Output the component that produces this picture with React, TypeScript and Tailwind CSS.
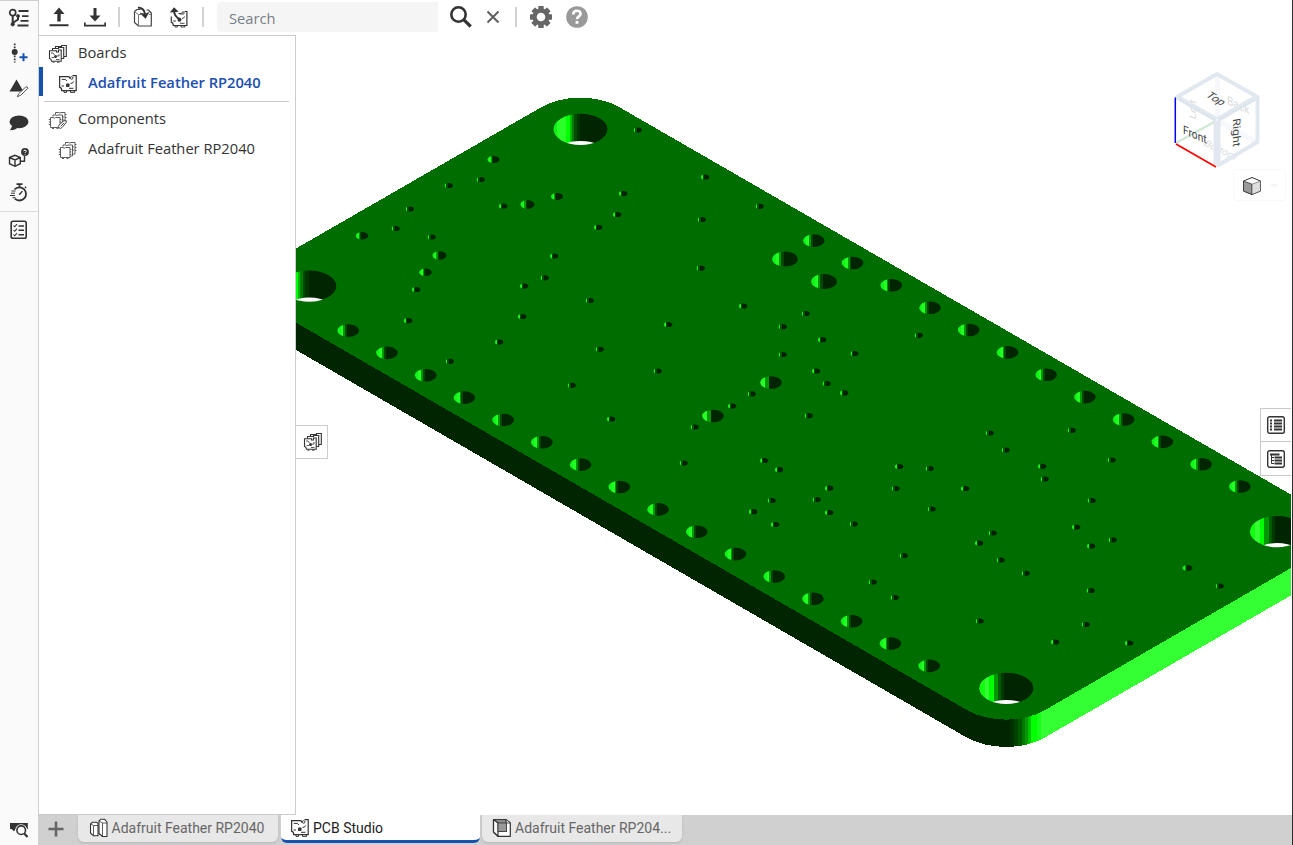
import React from "react";

type IconProps = { className?: string };

const INK = "#333333";

/* ---------- Left rail icons ---------- */

function FeatureListIcon() {
  return (
    <svg width="22" height="20" viewBox="0 0 22 20" fill="none" stroke={INK}>
      <circle cx="4.700" cy="4.700" r="3" strokeWidth="1.700" />
      <path d="M4.700 8v8M4.700 15 10 11.500V8.500" strokeWidth="2" />
      <circle cx="4.700" cy="16.300" r="1.700" fill={INK} strokeWidth=".8" />
      <circle cx="10" cy="8" r="1.500" fill={INK} strokeWidth=".8" />
      <path d="M10.500 3H20.500M14 8.200H20.500M12.500 12.900H20.500M9.500 17.500H20.500" strokeWidth="1.800" />
    </svg>
  );
}

function InsertPointIcon() {
  return (
    <svg width="22" height="20" viewBox="0 0 22 20">
      <path d="M6.700 0.500V19.500" stroke={INK} strokeWidth="1.700" strokeDasharray="1.800 1.200" />
      <circle cx="6.700" cy="9" r="3" fill={INK} />
      <path d="M15.500 10.200V18.200M11.500 14.200H19.500" stroke="#1651b0" strokeWidth="2" />
    </svg>
  );
}

function AppearanceIcon() {
  return (
    <svg width="22" height="20" viewBox="0 0 22 20">
      <path d="M8.500 1.500 15.500 13.500H1.500Z" fill={INK} />
      <path d="M9.300 18.700 10.700 15.700 17.700 9Q19.500 8.200 19.800 10.200L12.800 17.200Z" fill="#fafafa" stroke="#555" strokeWidth="1" />
    </svg>
  );
}

function CommentIcon() {
  return (
    <svg width="22" height="20" viewBox="0 0 22 20" fill={INK}>
      <ellipse cx="11" cy="8.800" rx="9.500" ry="6.400" />
      <path d="M4.500 12.500 2 17.300Q7.500 17.500 10 14Z" />
    </svg>
  );
}

function PartHelpIcon() {
  return (
    <svg width="22" height="22" viewBox="0 0 22 22" fill="none" stroke={INK} strokeWidth="1.400">
      <path d="M1.500 10.500 6.800 8.300 12.300 10.500V16.700L7 19.300 1.500 16.700ZM1.500 10.500 7 13 12.300 10.500M7 13V19" />
      <path d="M13 14.300H16.500V9" />
      <circle cx="17" cy="5" r="3.900" fill={INK} stroke="none" />
      <path d="M15.500 4.200C15.800 2.700 18.300 2.800 18.300 4.200 18.200 5 17 5 17 6M17 7V7.800" stroke="#fff" strokeWidth="1" />
    </svg>
  );
}

function StopwatchIcon() {
  return (
    <svg width="22" height="22" viewBox="0 0 22 22" fill="none" stroke={INK}>
      <path d="M6.500 7.500A6.600 6.600 0 1 1 6.800 16.600" strokeWidth="1.800" />
      <path d="M8.500 2.200H14.500M11.500 2.500V5M17 5.800 18 4.800" strokeWidth="1.700" />
      <path d="m11.200 12.700 3.200-3.600" strokeWidth="1.400" />
      <path d="M3.500 9H7.500M3 11.200H7M2 13.500H7M4.500 15.700H7.500" strokeWidth="1" />
    </svg>
  );
}

function ChecklistIcon() {
  return (
    <svg width="18" height="20" viewBox="0 0 18 20" fill="none" stroke={INK}>
      <rect x="1.200" y="1.200" width="15" height="17" rx="1.800" strokeWidth="1.600" />
      <path d="m3.500 5.500 1.200 1.300L7 4.200M3.500 10l1.200 1.300L7 8.700M3.500 14.500l1.200 1.300L7 13.200" strokeWidth="1.100" />
      <path d="M8.500 6H14M8.500 10.300H14M8.500 14.800H14" strokeWidth="1.500" />
    </svg>
  );
}

function InspectIcon() {
  return (
    <svg width="20" height="18" viewBox="0 0 20 18">
      <path d="M1 2H18.800V8H1ZM2.500 8H7L4.800 10.200Z" fill={INK} />
      <circle cx="12.200" cy="9.200" r="6" fill="#fafafa" />
      <circle cx="12.200" cy="9.200" r="4.300" fill="#fafafa" stroke={INK} strokeWidth="1.600" />
      <path d="m15.200 12.600 3.300 3.400" stroke={INK} strokeWidth="2.200" />
    </svg>
  );
}

/* ---------- Board and component icons ---------- */

function BoardIcon({ className = "" }: IconProps) {
  return (
    <svg className={className} width="20" height="20" viewBox="0 0 20 20" fill="none" stroke={INK}>
      <path d="M12 4.500 11 2.700H1.600V13.300Q3.800 13.500 3.700 16.700H18.200V1.600H14.500" strokeWidth="1.200" />
      <circle cx="13.700" cy="4" r="1.300" strokeWidth=".9" />
      <path d="M6 17V18.400H8.500V17M12.500 17V18.400H16.500V17" strokeWidth="1" />
      <rect x="8" y="9.500" width="3.500" height="3.500" rx=".8" fill={INK} stroke="none" />
      <path d="M3.700 5.400H7.500L9 7M12.500 9.500Q15 9.500 15.500 7.500M3.500 12H6M11 14.300H15.500" strokeWidth="1" />
    </svg>
  );
}

function BoardsStackIcon() {
  return (
    <svg width="20" height="20" viewBox="0 0 20 20" fill="#fff" stroke={INK} strokeWidth="1.100">
      <path d="M7.500 4V2.500H13.500V1.500H18.300V12.500H16" />
      <path d="M4.500 6.500V4.500H10.500V3.500H15.700V14.500H13" />
      <path d="M1.500 6.800H8.500V8H10.500V6H13.200V17.200H3.500Q3.500 15 1.500 14.500Z" />
      <path d="M3 9H5L6.500 11M8.500 12H11V10M3.500 13.500H6M8 15.500H11.500M4.500 18.300H6.500M9 18.300H11.500" strokeWidth=".8" />
      <circle cx="7.500" cy="12.500" r="1.500" fill={INK} stroke="none" />
    </svg>
  );
}

function ComponentsStackIcon({ clip = false }: { clip?: boolean }) {
  return (
    <svg width="20" height="20" viewBox="0 0 20 20" fill="#fff" stroke="#4c4c4c" strokeWidth=".9">
      <path d="M7.500 4.500V2.500H10.500Q12 3.500 13 2.500H17V14H15" />
      <path d="M5 6.500V5H7.500Q9 6 10 5H14.500V16H12.500" />
      <path d="M2.500 7.500H5Q6.200 9 7.500 7.500H12V17.500H2.500Z" />
      <path d="M.8 9.500H2.500M.8 12H2.500M.8 14.500H2.500M12 9.500H13.300M12 12H13.300M12 14.500H13.300M14.500 7H16M14.500 10H16M17 4.500H18.500M17 7.500H18.500M17 10.500H18.500M4 18.500H6M8.500 18.500H10.500" strokeWidth=".9" />
      {clip && (
        <path d="M11.500 18.200Q9.500 16.500 11 15L16 10.700Q18.500 10 18.500 12.200L14 17.500Q12.500 19 11.500 18.200M12.700 16.300 16.300 12.700" strokeWidth="1" />
      )}
    </svg>
  );
}

function AssemblyIcon() {
  return (
    <svg width="20" height="20" viewBox="0 0 20 20" fill="#fff" stroke={INK} strokeWidth="1.100" strokeLinejoin="round">
      <path d="M1.500 6 3.500 4.200H7.500L9 5.500V17.800H4.500L1.500 15Z" />
      <path d="M1.500 6 4.500 7.500H9M4.500 7.500V17.800" strokeWidth=".8" />
      <path d="M10 3 12 1.200H15.500L18 4V18.500H13.500L10 15.500Z" />
      <path d="M10 3 13.500 5H18M13.500 5V18.500" strokeWidth=".8" />
    </svg>
  );
}

function PartStudioIcon() {
  return (
    <svg width="20" height="20" viewBox="0 0 20 20" stroke={INK} strokeWidth="1.200" strokeLinejoin="round">
      <path d="M1.500 1.500H14L18.300 5V18.300H6L1.500 14Z" fill="#fff" />
      <path d="M1.500 1.500H14L14.500 13.500H6V5Z" fill="#8a8a8a" strokeWidth=".8" />
      <path d="M1.500 1.500 6 5V18.300L1.500 14Z" fill="#f8f8f8" />
      <path d="M6 5H14.500V13.500H6Z" fill="#999" strokeWidth=".8" />
      <path d="M14 1.500 18.300 5H14.500Z" fill="#fff" strokeWidth=".8" />
    </svg>
  );
}

/* ---------- Toolbar icons ---------- */

function ArrowBarIcon({ down = false }: { down?: boolean }) {
  return (
    <svg width="22" height="20" viewBox="0 0 22 20" fill={INK}>
      {down ? (
        <path d="M9.500 1H12.500V8.500H16.500L11 14.500 5.500 8.500H9.500ZM0 15.500H1.700V17.700H20.300V15.500H22V19.500H0Z" />
      ) : (
        <path d="M11 .5 16.500 7H12.700V14.500H9.300V7H5.500ZM1.500 17.300H20.500V19.300H1.500Z" />
      )}
    </svg>
  );
}

function ImportPartIcon() {
  return (
    <svg width="20" height="22" viewBox="0 0 20 22" fill="none" stroke="#444" strokeWidth="1.200" strokeLinejoin="round">
      <path d="M7.500 3.500H4L1.500 5.500V16.500L5.500 20H18.300V7L15.500 4H13.500" />
      <path d="M1.500 5.500 5.500 8.500H8M5.500 8.500V20M16 8.500H18" stroke="#777" strokeWidth="1" />
      <path d="M5 1.500Q11.500 2 12 8.500" stroke={INK} strokeWidth="2" />
      <path d="M7 7 12.500 12.500 16 6.300 12 8Z" fill={INK} stroke={INK} strokeWidth=".5" />
    </svg>
  );
}

function UpdateBoardIcon() {
  return (
    <svg width="20" height="22" viewBox="0 0 20 22" fill="none" stroke={INK}>
      <path d="M2.300 10.500V16.300Q4.500 16.800 4.300 19.500H17.900V5.500H15.500M9.500 7.500H11.500L12.500 8.500" strokeWidth="1.200" />
      <path d="M6 20V21H8.500V20M12 20V21H16V20" strokeWidth=".9" />
      <circle cx="14" cy="7" r="1.200" strokeWidth=".9" />
      <path d="M5 5Q5.500 10.500 10.500 13" strokeWidth="2" />
      <path d="M.8 6.500 5 1.200 9.700 5.700Z" fill={INK} stroke="none" />
      <circle cx="10.500" cy="13.800" r="2" fill={INK} stroke="none" />
      <path d="M13 12.500Q15 12.500 15.500 10.500M4 15H7M11 17.300H15.500" strokeWidth=".9" />
    </svg>
  );
}

function SearchIcon() {
  return (
    <svg width="24" height="24" viewBox="0 0 24 24" fill="none" stroke={INK}>
      <circle cx="9.500" cy="9.500" r="7.200" strokeWidth="2.600" />
      <path d="m14.700 14.700 7 6.800" strokeWidth="3.200" />
    </svg>
  );
}

function GearIcon() {
  const teeth = [0, 45, 90, 135, 180, 225, 270, 315];
  return (
    <svg width="22" height="22" viewBox="0 0 22 22" fill="#666">
      {teeth.map((a) => (
        <rect key={a} x="8.300" y="0" width="5.400" height="6" rx=".6" transform={`rotate(${a} 11 11)`} />
      ))}
      <circle cx="11" cy="11" r="6.400" fill="none" stroke="#666" strokeWidth="4.200" />
    </svg>
  );
}

function HelpIcon() {
  return (
    <svg width="22" height="22" viewBox="0 0 22 22" fill="none">
      <circle cx="11" cy="11" r="10.800" fill="#999" />
      <path d="M7.300 8.400C7.300 3.600 14.800 3.800 14.600 8 14.400 10.500 11 10.300 11 13.200" stroke="#fff" strokeWidth="2.600" />
      <path d="M9.600 15H12.400V17.800H9.600Z" fill="#fff" />
    </svg>
  );
}

function ListIcon({ tree = false }: { tree?: boolean }) {
  return (
    <svg width="20" height="20" viewBox="0 0 20 20" fill="none" stroke={INK}>
      <rect x="1.700" y="1.700" width="16.600" height="16.600" rx="2" strokeWidth="1.400" />
      {tree ? (
        <>
          <path d="M4 5.500H13.500M8.500 8.500H16M8.500 11.500H16M8.500 14.500H16" strokeWidth="1.800" />
          <path d="M5.500 6V14.500M5.500 8.500H8M5.500 11.500H8M5.500 14.500H8" strokeWidth="1" />
        </>
      ) : (
        <>
          <path d="M4 5.500H6M4 8.500H6M4 11.500H6M4 14.500H6" strokeWidth="1.800" />
          <path d="M8 5.500H16M8 8.500H16M8 11.500H16M8 14.500H16" strokeWidth="1.800" />
        </>
      )}
    </svg>
  );
}

/* ---------- Board model ---------- */

const THICKNESS = 27.3;

const mountingHoles: [number, number, string][] = [
  [580.500, 129.300, "url(#bore-a)"],
  [309.300, 286, "url(#bore-a)"],
  [1006.300, 688.300, "url(#bore-b)"],
  [1277, 531.500, "url(#bore-b)"],
];

const headerHoles: [number, number][] = [
  ...Array.from({ length: 16 }, (_, i): [number, number] => [348.200 + i * 38.730, 330.500 + i * 22.360]),
  ...Array.from({ length: 12 }, (_, i): [number, number] => [813.800 + i * 38.730, 240.600 + i * 22.360]),
  [771, 382.500],
  [713, 416],
];

const debugHoles: [number, number][] = [
  [785, 259],
  [824, 281.500],
];

const mediumHoles: [number, number, number][] = [
  [493.500, 159.500, 6], [557, 196.500, 6], [527.500, 204.500, 7], [362, 235.800, 6.300],
  [439.500, 255.500, 7], [425.500, 272.300, 6.300], [1187.500, 568, 5],
];

const vias: [number, number][] = [
  [638, 130], [705.500, 177], [760, 206.300], [481, 179.500], [449, 185.500], [410, 209],
  [503.500, 206], [396, 228.500], [432, 237], [416.500, 289.500], [408.500, 320.700], [450, 361.300],
  [623.500, 193.500], [617.500, 214.500], [598.500, 227.300], [702, 219.500], [554.500, 256],
  [545, 277.800], [524.500, 286], [701, 268.200], [590, 300.500], [522.500, 316.500], [499.500, 342],
  [600, 349.300], [572, 385.300], [611.500, 419], [668.500, 324.500], [658, 371], [743.500, 306],
  [806, 313.500], [783, 326.700], [822.500, 339.700], [783, 354.500], [854.700, 353.500], [816.500, 371],
  [827, 383.500], [844.500, 392.900], [752, 393.900], [732.500, 406], [809, 415.700], [695, 427],
  [684, 463], [919, 335.300], [990, 433], [1072, 430.300], [1006, 450], [1042.500, 466.300],
  [1045, 479], [1112, 460], [764.500, 460.500], [779.500, 469.700], [899.500, 466.500], [930, 468.500],
  [829.500, 488.200], [896, 488.500], [965.500, 488.500], [772, 500.500], [817, 499.500], [829.500, 512.500],
  [753.500, 511.700], [775.500, 524.500], [854, 524], [932, 509], [1092, 500.500], [1076.500, 527],
  [993, 533], [979.500, 543], [1001, 560], [1026, 573.300], [1113, 539.800], [1091.500, 546],
  [904, 555.500], [873, 582], [895, 597.500], [1091, 590.500], [1220, 586], [980, 621],
  [1086, 624.500], [1055.500, 642], [1129.500, 643],
];

function hardStops(stops: [number, string][]) {
  return stops.flatMap(([end, color], i) => {
    const start = i === 0 ? 0 : stops[i - 1][0];
    return [
      <stop key={`${i}s`} offset={start} stopColor={color} />,
      <stop key={`${i}e`} offset={end} stopColor={color} />,
    ];
  });
}

function BoardModel() {
  return (
    <svg className="block h-full w-full" viewBox="296 36 995 779" preserveAspectRatio="xMinYMin slice">
      <defs>
        <linearGradient id="bore-a">
          {hardStops([[0.06, "#0ff01a"], [0.23, "#2aff2a"], [0.3, "#00ff00"], [0.335, "#00b800"], [0.38, "#007a00"], [0.43, "#004d00"], [0.5, "#003500"], [1, "#002500"]])}
        </linearGradient>
        <linearGradient id="bore-b">
          {hardStops([[0.1, "#12ff12"], [0.19, "#33ff33"], [0.27, "#00ff00"], [0.35, "#009600"], [0.4, "#005c00"], [0.46, "#003a00"], [1, "#002500"]])}
        </linearGradient>
        <linearGradient id="pin">
          {hardStops([[0.15, "#12f51a"], [0.28, "#22ff22"], [0.36, "#009800"], [0.45, "#004800"], [1, "#002500"]])}
        </linearGradient>
        <linearGradient id="header-pin">
          {hardStops([[0.24, "#2aff2a"], [0.4, "#009a00"], [1, "#002500"]])}
        </linearGradient>
        <linearGradient id="via">
          {hardStops([[0.07, "#0a8a0a"], [0.24, "#18f01c"], [0.4, "#004c00"], [1, "#002200"]])}
        </linearGradient>
        <linearGradient id="corner" gradientUnits="userSpaceOnUse" x1="967" x2="1045" y1="0" y2="0">
          {hardStops([[0.55, "#002500"], [0.6, "#003000"], [0.65, "#004200"], [0.7, "#005800"], [0.74, "#007800"], [0.78, "#009a00"], [0.82, "#00c400"], [0.9, "#00ff00"], [0.95, "#18ff18"], [1, "#33ff33"]])}
        </linearGradient>
        {mountingHoles.map(([x, y], i) => (
          <clipPath key={i} id={`bore-clip-${i}`}>
            <ellipse cx={x} cy={y} rx="27.200" ry="15.700" />
          </clipPath>
        ))}
      </defs>

      <g shapeRendering="crispEdges">
        <path d="M200 267.200 967.500 710.400V738L200 294.500Z" fill="#002500" />
        <path d="M1044.500 710.400 1400 505.100V532.400L1044.500 737.700Z" fill="#33ff33" />
        <path d="M967.500 710.400V737.700A54.500 31.500 0 0 0 1044.500 737.700V710.400Z" fill="url(#corner)" />
        <path
          d="M200 303.800 541.800 106.900A54.500 31.500 0 0 1 618.800 106.900L1400 557.500V505.100L1044.500 710.400A54.500 31.500 0 0 1 967.500 710.400L200 267.200Z"
          fill="#006d00"
        />
      </g>

      {mountingHoles.map(([x, y, fill], i) => (
        <g key={i} clipPath={`url(#bore-clip-${i})`}>
          <ellipse cx={x} cy={y} rx="27.200" ry="15.700" fill={fill} />
          <ellipse cx={x} cy={y + THICKNESS} rx="27.200" ry="15.700" fill="#fff" />
        </g>
      ))}
      {debugHoles.map(([x, y], i) => (
        <ellipse key={i} cx={x} cy={y} rx="12.800" ry="7.500" fill="url(#pin)" />
      ))}
      {headerHoles.map(([x, y], i) => (
        <ellipse key={i} cx={x} cy={y} rx="10.800" ry="6.300" fill={i < 28 ? "url(#pin)" : "url(#header-pin)"} />
      ))}
      {mediumHoles.map(([x, y, r], i) => (
        <ellipse key={i} cx={x} cy={y} rx={r} ry={r * 0.6} fill="url(#pin)" />
      ))}
      {vias.map(([x, y], i) => (
        <ellipse key={i} cx={x - 0.4} cy={y} rx="4.200" ry="2.600" fill="url(#via)" />
      ))}
    </svg>
  );
}

function ViewCube() {
  return (
    <svg width="96" height="106" viewBox="1169 66 96 106" fill="none" fontFamily="Roboto, sans-serif">
      <path d="M1217.500 74V120M1217 120 1257 143" stroke="#f6f8fb" strokeWidth="5" />
      <g fill="#d9dbdd" fontSize="12">
        <text transform="matrix(.85 .4 0 1 1227 104)">Back</text>
        <text transform="matrix(0 -1 .87 .3 1196 120)" fontSize="11">Left</text>
        <text transform="matrix(.8 .38 -.5 .6 1203 145)">Bottom</text>
      </g>
      <path d="M1176 143 1216 121" stroke="#d2e8d6" strokeWidth="2.500" />
      <g stroke="#e1e8ef" strokeLinejoin="round">
        <path d="M1177 97 1217 74 1257.500 97 1217 120Z" strokeWidth="4" />
        <path d="M1257.500 97V142L1217 166" strokeWidth="4" />
        <path d="M1177 97 1217 120 1257 97" strokeWidth="5" />
        <path d="M1217 120V165" strokeWidth="7" />
      </g>
      <path d="M1180 100 1217 121 1254 100" stroke="#cfdae4" strokeWidth=".8" strokeDasharray="2 1" />
      <circle cx="1217" cy="120" r="1" fill="#fff" />
      <path d="M1175.300 97.500V143" stroke="#0000ff" strokeWidth="1.500" />
      <path d="M1176 144 1216 167" stroke="#ff0000" strokeWidth="1.700" />
      <g fill="#444">
        <text transform="matrix(.74 .45 -.7 .5 1205 96)" fontSize="13">Top</text>
        <text transform="matrix(.85 .37 0 1 1183 133.500)" fontSize="12">Front</text>
        <text transform="matrix(0 1 -.85 .15 1232.500 119)" fontSize="12.300">Right</text>
      </g>
    </svg>
  );
}

/* ---------- Page ---------- */

function Rail() {
  return (
    <nav className="flex w-[39px] shrink-0 flex-col items-center border-t border-r border-[#d0d0d0] bg-[#fafafa]">
      <div className="flex h-[34px] items-center"><FeatureListIcon /></div>
      <div className="flex h-[35px] items-center"><InsertPointIcon /></div>
      <div className="flex h-[35px] items-center"><AppearanceIcon /></div>
      <div className="flex h-[35px] items-center"><CommentIcon /></div>
      <div className="flex h-[35px] items-center"><PartHelpIcon /></div>
      <div className="flex h-[36px] items-center"><StopwatchIcon /></div>
      <div className="flex h-[36px] w-full items-center justify-center border-t border-[#dcdcdc]"><ChecklistIcon /></div>
      <div className="mt-auto pb-[6px]"><InspectIcon /></div>
    </nav>
  );
}

function Divider() {
  return <div className="h-5 w-0.5 bg-[#d2d2d2]" />;
}

function Toolbar() {
  return (
    <header className="flex h-[35px] shrink-0 items-start pl-[9px]">
      <div className="flex h-[34px] items-center">
        <ArrowBarIcon />
        <div className="ml-3.5"><ArrowBarIcon down /></div>
        <div className="ml-3"><Divider /></div>
        <div className="ml-[13px]"><ImportPartIcon /></div>
        <div className="ml-4"><UpdateBoardIcon /></div>
        <div className="ml-[13px]"><Divider /></div>
      </div>
      <div className="mt-0.5 ml-[13px] flex h-[30px] w-[221px] items-center rounded-l bg-[#f5f5f5] pt-0.5 pl-3 text-[14.7px] text-[#777f87]">
        Search
      </div>
      <div className="flex h-[34px] items-center">
        <div className="ml-[11px]"><SearchIcon /></div>
        <svg className="ml-[13px]" width="14" height="14" viewBox="0 0 14 14" stroke="#606060" strokeWidth="2">
          <path d="m1.500 1.500 11 11M12.500 1.500l-11 11" />
        </svg>
        <div className="ml-[15px]"><Divider /></div>
        <div className="ml-[13px]"><GearIcon /></div>
        <div className="ml-3.5"><HelpIcon /></div>
      </div>
    </header>
  );
}

function SidePanel() {
  return (
    <aside className="w-[257px] shrink-0 border-t border-r border-b border-[#cccccc] bg-white text-[14.7px] leading-[30px] text-[#333]">
      <div className="flex h-[31px] items-center gap-2.5 pl-[9px]">
        <div className="mt-1"><BoardsStackIcon /></div>
        <span>Boards</span>
      </div>
      <div className="flex h-[29px] items-center border-l-4 border-[#1651b0] pl-[15px] text-[#1b4fb0]">
        <BoardIcon className="mt-1" />
        <span className="ml-2.5 font-semibold">Adafruit Feather RP2040</span>
      </div>
      <div className="mr-[6px] ml-[5px] mt-[5px] h-px bg-[#cccccc]" />
      <div className="flex h-[31px] items-center gap-2.5 pl-[9px]">
        <div className="mt-1"><ComponentsStackIcon clip /></div>
        <span>Components</span>
      </div>
      <div className="flex h-[29px] items-center gap-2.5 pl-[19px]">
        <div className="mt-1"><ComponentsStackIcon /></div>
        <span>Adafruit Feather RP2040</span>
      </div>
    </aside>
  );
}

function Viewer() {
  return (
    <main className="relative min-w-0 flex-1">
      <div className="h-full overflow-hidden pt-px"><BoardModel /></div>
      <div className="absolute top-[31px] right-[26px]"><ViewCube /></div>
      <div className="absolute top-[134px] right-[5px] flex h-8 w-[53px] items-center rounded-sm border border-[#f8f8f8] pt-px pl-[8px]">
        <svg width="20" height="20" viewBox="0 0 20 20" stroke="#333" strokeWidth="1" strokeLinejoin="round">
          <path d="M10 1.500 18.500 5V15L10 18.500 1.500 15V5Z" fill="#fff" />
          <path d="M1.500 5 10 8.200V18.500L1.500 15Z" fill="#999" strokeWidth=".8" />
          <path d="M10 8.200 18.500 5V15L10 18.500Z" fill="#ddd" strokeWidth=".5" />
        </svg>
        <svg className="ml-[8px]" width="8" height="4" viewBox="0 0 8 4"><path d="M0 0H8L4 4Z" fill="#f5f5f5" /></svg>
      </div>
      <div className="absolute top-[390px] left-0 flex h-[34px] w-8 items-center justify-center border border-l-0 border-[#ccc] bg-white pl-0.5">
        <BoardsStackIcon />
      </div>
      <div className="absolute top-[373px] right-0 w-[31px] border border-r-0 border-[#c8c8c8] bg-white">
        <div className="flex h-8 items-center justify-center"><ListIcon /></div>
        <div className="flex h-[34px] items-center justify-center border-t border-[#c8c8c8]"><ListIcon tree /></div>
      </div>
    </main>
  );
}

function TabBar() {
  return (
    <footer className="flex h-[30px] shrink-0 bg-[#d0d0d0] text-[14px] text-[#666]" style={{ fontFamily: "Roboto, sans-serif" }}>
      <div className="flex h-[28px] w-[39px] items-center pl-[9px]">
        <svg width="16" height="16" viewBox="0 0 16 16" stroke="#666" strokeWidth="2.600"><path d="M8 .5V15.500M.5 8H15.500" /></svg>
      </div>
      <div className="flex h-[27px] w-[200px] items-center rounded-b-md bg-[#e8e8e8] pb-px pl-[11px] shadow-sm">
        <AssemblyIcon />
        <span className="ml-[2.5px]">Adafruit Feather RP2040</span>
      </div>
      <div className="ml-[3px] flex h-[28px] w-[199px] items-center rounded-b-md border-b-3 border-[#1651b0] bg-white pt-px pl-[9px] text-[#222]">
        <BoardIcon />
        <span className="ml-[3px]">PCB Studio</span>
      </div>
      <div className="ml-0.5 flex h-[27px] w-[200px] items-center rounded-b-md bg-[#e8e8e8] pb-px pl-[10px] shadow-sm">
        <PartStudioIcon />
        <span className="ml-[3px]">Adafruit Feather RP204...</span>
      </div>
    </footer>
  );
}

export default function App() {
  return (
    <div className="flex h-[845px] w-[1293px] overflow-hidden border-r border-[#2c3028] bg-white" style={{ fontFamily: "'Open Sans', 'Noto Sans', sans-serif" }}>
      <Rail />
      <div className="flex min-w-0 flex-1 flex-col">
        <div className="flex min-h-0 flex-1 flex-col pr-px">
          <Toolbar />
          <div className="flex min-h-0 flex-1">
            <SidePanel />
            <Viewer />
          </div>
        </div>
        <TabBar />
      </div>
    </div>
  );
}
